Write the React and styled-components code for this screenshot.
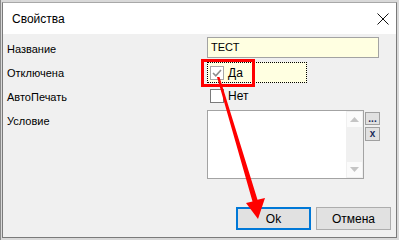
import React from 'react'
import styled, { createGlobalStyle } from 'styled-components'

const GlobalStyle = createGlobalStyle`
  html, body {
    margin: 0;
    padding: 0;
    background: #d4d4d4;
  }
`

const Page = styled.div`
  position: relative;
  width: 399px;
  height: 240px;
  box-sizing: border-box;
  padding: 2px 0 0 2px;
  overflow: hidden;
  background: #d9d9d9;
  border-left: 1px solid #8a8a8a;
  font-family: "Liberation Sans", Arial, sans-serif;
  font-size: 11px;
  color: #000;
`

const Window = styled.div`
  display: flex;
  flex-direction: column;
  width: 395px;
  height: 236px;
  box-sizing: border-box;
  margin-left: -1px;
  border: 1px solid #7a7a7a;
  border-top-color: #a8a8a8;
  background: #f0f0f0;
`

const TitleBar = styled.div`
  display: flex;
  align-items: center;
  justify-content: space-between;
  height: 31px;
  padding: 0 7px 0 9px;
  background: #fff;
`

const Title = styled.span`
  font-size: 12px;
  color: #000;
`

const Content = styled.div`
  flex: 1;
  display: flex;
  flex-direction: column;
  padding: 3px 0 0 4px;
`

const Row = styled.div`
  display: flex;
  align-items: flex-start;
  height: ${p => p.$h}px;
`

const Label = styled.div`
  width: 200px;
  flex: none;
  line-height: 13px;
  padding-top: ${p => p.$pad}px;
`

const TextInput = styled.div`
  width: 172px;
  height: 21px;
  box-sizing: border-box;
  padding: 3px 3px;
  line-height: 13px;
  border: 1px solid #a3a3a3;
  background: #ffffe1;
`

const FocusBox = styled.div`
  display: flex;
  align-items: center;
  gap: 4px;
  width: 100px;
  height: 21px;
  box-sizing: border-box;
  padding-left: 2px;
  border: 1px dotted #000;
  background: #ffffe1;
`

const CheckRow = styled.div`
  display: flex;
  align-items: center;
  gap: 4px;
  padding: 2px 0 0 3px;
`

const Box = styled.div`
  display: flex;
  align-items: center;
  justify-content: center;
  width: 14px;
  height: 14px;
  box-sizing: border-box;
  border: 1px solid ${p => (p.$checked ? '#a8a8a8' : '#7a7a7a')};
  background: #fff;
`

const CheckText = styled.span`
  font-size: 12px;
  line-height: 14px;
`

const MemoWrap = styled.div`
  display: flex;
  align-items: flex-start;
  margin-top: 1px;
`

const Memo = styled.div`
  display: flex;
  justify-content: flex-end;
  width: 157px;
  height: 69px;
  box-sizing: border-box;
  border: 1px solid #a3a3a3;
  background: #fff;
`

const ScrollBar = styled.div`
  display: flex;
  flex-direction: column;
  justify-content: space-between;
  width: 17px;
  box-sizing: border-box;
  padding: 1px 1px 1px 1px;
  background: #f0f0f0;
`

const ScrollArrow = styled.div`
  display: flex;
  align-items: center;
  justify-content: center;
  height: 15px;
  background: #fbfbfb;
`

const SideButtons = styled.div`
  display: flex;
  flex-direction: column;
  gap: 2px;
  margin: 2px 0 0 1px;
`

const SmallButton = styled.div`
  display: flex;
  align-items: center;
  justify-content: center;
  width: 15px;
  height: ${p => p.$h}px;
  box-sizing: border-box;
  border: 1px solid #a0a0a0;
  background: #e1e1e1;
  font-size: 10px;
  font-weight: bold;
  line-height: 1;
  color: #1b2a5a;
`

const Footer = styled.div`
  display: flex;
  justify-content: flex-end;
  gap: 5px;
  margin-top: auto;
  padding: 0 5px 7px 0;
`

const Button = styled.div`
  display: flex;
  align-items: center;
  justify-content: center;
  width: 75px;
  height: 23px;
  box-sizing: border-box;
  border: ${p => (p.$primary ? '2px solid #0078d7' : '1px solid #adadad')};
  background: #e1e1e1;
  font-size: 12px;
`

const Annotation = styled.svg`
  position: absolute;
  left: 0;
  top: 0;
  pointer-events: none;
`

const Triangle = ({ down }) => (
  <svg width="9" height="5" viewBox="0 0 9 5">
    <path d={down ? 'M0 0 H9 L4.5 5 Z' : 'M0 5 H9 L4.5 0 Z'} fill="#c5c5c5" />
  </svg>
)

const App = () => (
  <Page>
    <GlobalStyle />
    <Window>
      <TitleBar>
        <Title>Свойства</Title>
        <svg width="12" height="12" viewBox="0 0 12 12">
          <path d="M0.5 0.5 L11.5 11.5 M11.5 0.5 L0.5 11.5" stroke="#111" strokeWidth="1" />
        </svg>
      </TitleBar>
      <Content>
        <Row $h={25}>
          <Label $pad={6}>Название</Label>
          <TextInput>ТЕСТ</TextInput>
        </Row>
        <Row $h={25}>
          <Label $pad={5}>Отключена</Label>
          <FocusBox>
            <Box $checked>
              <svg width="10" height="8" viewBox="0 0 10 8">
                <path d="M1 4 L3.8 6.8 L9 1" fill="none" stroke="#8c8c8c" strokeWidth="1.6" />
              </svg>
            </Box>
            <CheckText>Да</CheckText>
          </FocusBox>
        </Row>
        <Row $h={22}>
          <Label $pad={4}>АвтоПечать</Label>
          <CheckRow>
            <Box />
            <CheckText>Нет</CheckText>
          </CheckRow>
        </Row>
        <Row $h={70}>
          <Label $pad={6}>Условие</Label>
          <MemoWrap>
            <Memo>
              <ScrollBar>
                <ScrollArrow><Triangle /></ScrollArrow>
                <ScrollArrow><Triangle down /></ScrollArrow>
              </ScrollBar>
            </Memo>
            <SideButtons>
              <SmallButton $h={13}>...</SmallButton>
              <SmallButton $h={14}>x</SmallButton>
            </SideButtons>
          </MemoWrap>
        </Row>
        <Footer>
          <Button $primary>Ok</Button>
          <Button>Отмена</Button>
        </Footer>
      </Content>
    </Window>
    <Annotation width="399" height="240" viewBox="0 0 399 240">
      <rect x="201.5" y="60.5" width="51" height="25" fill="none" stroke="#ff0000" strokeWidth="3" />
      <path d="M216 77 L218.5 77 L256.5 199.8 L264 198 L257 219 L245 203 L251.5 201.5 Z" fill="#ff0000" />
    </Annotation>
  </Page>
)

export default App
